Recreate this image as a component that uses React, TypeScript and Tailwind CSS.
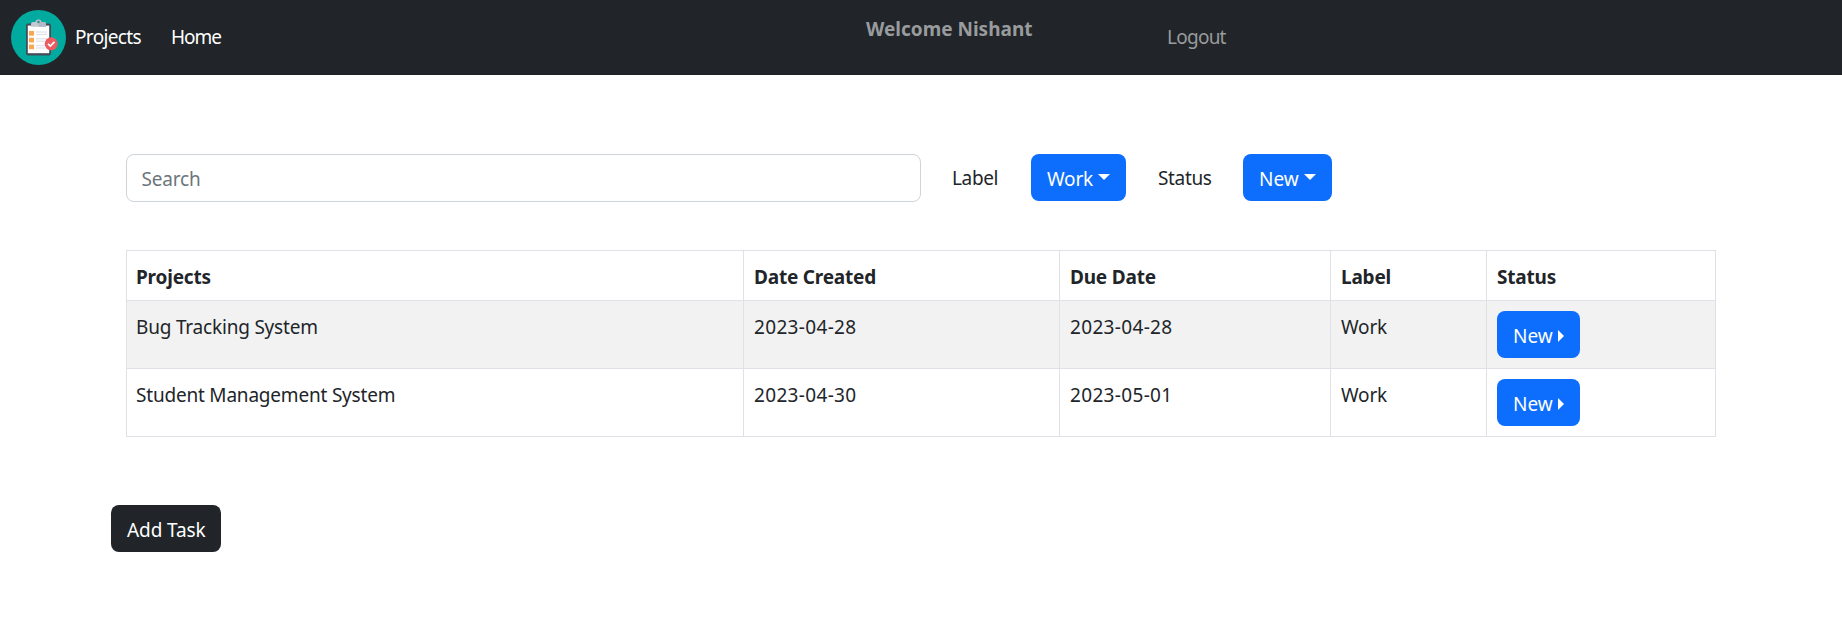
const projects = [
  { name: "Bug Tracking System", created: "2023-04-28", due: "2023-04-28", label: "Work", status: "New" },
  { name: "Student Management System", created: "2023-04-30", due: "2023-05-01", label: "Work", status: "New" },
];

function Logo() {
  return (
    <svg viewBox="0 0 55 55" className="h-[55px] w-[55px] shrink-0">
      <circle cx="27.5" cy="27.5" r="27.5" fill="#00aa9e" />
      <rect x="15" y="13.6" width="25" height="31.8" rx="1.8" fill="#434c59" />
      <rect x="16.8" y="15.6" width="21.4" height="27.6" fill="#fff" />
      <g fill="#f9a64f">
        <rect x="18" y="21" width="5" height="4.6" />
        <rect x="18" y="27.8" width="5" height="4.6" />
        <rect x="18" y="34.6" width="5" height="4.6" />
      </g>
      <g fill="#dfe2ea">
        <rect x="24.8" y="21.4" width="11.4" height="1.2" />
        <rect x="24.8" y="23.8" width="11.4" height="1.2" />
        <rect x="24.8" y="28.2" width="11.4" height="1.2" />
        <rect x="24.8" y="30.6" width="9" height="1.2" />
        <rect x="24.8" y="35" width="9" height="1.2" />
        <rect x="24.8" y="37.4" width="9.5" height="1.2" />
      </g>
      <path d="M20 16.8v-2.6q0-2.2 2.2-2.2h2.1a3.3 3.3 0 0 1 6.4 0h2.1q2.2 0 2.2 2.2v2.6z" fill="#c3c8d3" />
      <path d="M27.5 9.4q2.4 0 3.2 2.6h2.1q2.2 0 2.2 2.2v2.6h-7.5z" fill="#b3b8c5" />
      <circle cx="27.4" cy="12" r="1.3" fill="#33908d" />
      <circle cx="40.2" cy="33.8" r="6.5" fill="#ed5b62" />
      <path d="M37 33.9l2.3 2.2 4.2-4.3" fill="none" stroke="#fff" strokeWidth="1.7" />
    </svg>
  );
}

function CaretDown() {
  return (
    <svg viewBox="0 0 12 6" className="mt-[-4px] ml-[5px] h-[6px] w-[12px]">
      <path d="M0 0h12L6 6z" fill="#fff" />
    </svg>
  );
}

function CaretRight() {
  return (
    <svg viewBox="0 0 6 12" className="mt-[1px] ml-[5px] h-[12px] w-[6px]">
      <path d="M0 0v12L6 6z" fill="#fff" />
    </svg>
  );
}

export default function App() {
  return (
    <div className="h-[643px] overflow-hidden bg-white font-['Noto_Sans',sans-serif] text-[19px] leading-[30px] text-[#212529]">
      <nav className="flex h-[75px] border-b border-[#1c2023] bg-[#212529] pt-[10px] pl-[11px] text-white">
        <Logo />
        <a className="mt-[12px] ml-[9px] w-[96px] tracking-[-0.65px]">Projects</a>
        <a className="mt-[12px] w-[695px] tracking-[-1px]">Home</a>
        <span className="mt-[4px] w-[301px] font-bold text-[#999b9d]">Welcome Nishant</span>
        <a className="mt-[12px] tracking-[-0.75px] text-[#999b9d]">Logout</a>
      </nav>

      <main className="px-[126px] pt-[79px]">
        <div className="flex h-[48px]">
          <input
            placeholder="Search"
            className="h-[48px] w-[795px] rounded-[8px] border border-[#ced4da] px-[14.5px] pt-[2px] tracking-[-0.2px] outline-none placeholder:text-[#6c757d]"
          />
          <span className="mt-[9px] ml-[31px] w-[79px] tracking-[-0.35px]">Label</span>
          <button className="flex h-[47px] w-[95px] items-center rounded-[8px] bg-[#0d6efd] pt-[2px] pl-[16px] tracking-[-0.2px] text-white">
            Work
            <CaretDown />
          </button>
          <span className="mt-[9px] ml-[32px] w-[85px] tracking-[-0.35px]">Status</span>
          <button className="flex h-[47px] w-[89px] items-center rounded-[8px] bg-[#0d6efd] pt-[2px] pl-[16px] text-white">
            New
            <CaretDown />
          </button>
        </div>

        <table className="mt-[48px] w-[1590px] table-fixed border-collapse [&_td]:border [&_td]:border-[#dee2e6] [&_td]:pt-[11px] [&_td]:pl-[10px] [&_td]:align-top [&_th]:border [&_th]:border-[#dee2e6] [&_th]:pt-[3px] [&_th]:pl-[10px] [&_th]:text-left [&_th]:tracking-[-0.2px] [&_td:first-child]:pl-[9px] [&_th:first-child]:pl-[9px]">
          <colgroup>
            <col className="w-[617px]" />
            <col className="w-[316px]" />
            <col className="w-[271px]" />
            <col className="w-[156px]" />
            <col className="w-[229px]" />
          </colgroup>
          <thead>
            <tr className="h-[50px]">
              <th>Projects</th>
              <th>Date Created</th>
              <th>Due Date</th>
              <th>Label</th>
              <th>Status</th>
            </tr>
          </thead>
          <tbody>
            {projects.map((p) => (
              <tr key={p.name} className="h-[68px] odd:bg-[#f2f2f2]">
                <td className="tracking-[-0.2px]">{p.name}</td>
                <td className="tracking-[0.33px]">{p.created}</td>
                <td className="tracking-[0.33px]">{p.due}</td>
                <td className="tracking-[-0.2px]">{p.label}</td>
                <td>
                  <button className="mt-[-1px] flex h-[47px] w-[83px] items-center rounded-[8px] bg-[#0d6efd] pt-[2px] pl-[16px] text-white">
                    {p.status}
                    <CaretRight />
                  </button>
                </td>
              </tr>
            ))}
          </tbody>
        </table>

        <button className="mt-[68px] ml-[-15px] flex h-[47px] w-[110px] items-center rounded-[8px] bg-[#212529] pt-[2px] pl-[16px] tracking-[-0.1px] text-white">
          Add Task
        </button>
      </main>
    </div>
  );
}
